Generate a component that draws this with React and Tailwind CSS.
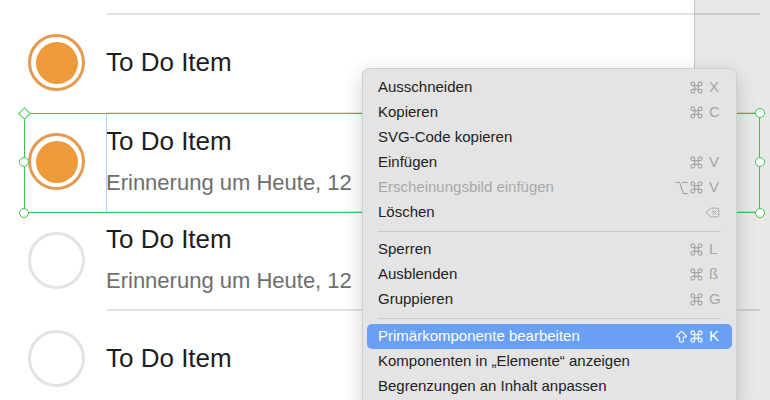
import React from 'react';
import { Command, Option, ArrowBigUp, Delete } from 'lucide-react';

const rows = [
  { checked: true, sub: null, h: 'h-[99px]' },
  { checked: true, sub: 'Erinnerung um Heute, 12', h: 'h-[99px]' },
  { checked: false, sub: 'Erinnerung um Heute, 12', h: 'h-[98px]' },
  { checked: false, sub: null, h: 'h-[99px]' },
];

const menu = [
  { label: 'Ausschneiden', mods: ['cmd'], key: 'X' },
  { label: 'Kopieren', mods: ['cmd'], key: 'C' },
  { label: 'SVG-Code kopieren' },
  { label: 'Einfügen', mods: ['cmd'], key: 'V' },
  { label: 'Erscheinungsbild einfügen', mods: ['opt', 'cmd'], key: 'V', disabled: true },
  { label: 'Löschen', del: true },
  'sep',
  { label: 'Sperren', mods: ['cmd'], key: 'L' },
  { label: 'Ausblenden', mods: ['cmd'], key: 'ß' },
  { label: 'Gruppieren', mods: ['cmd'], key: 'G' },
  'sep',
  { label: 'Primärkomponente bearbeiten', mods: ['shift', 'cmd'], key: 'K', active: true },
  { label: 'Komponenten in \u201EElemente\u201C anzeigen' },
  { label: 'Begrenzungen an Inhalt anpassen' },
];

const Check = ({ checked }) =>
  checked ? (
    <div className="w-[57px] h-[57px] rounded-full border-[3px] border-[#e49b4f] flex items-center justify-center">
      <div className="w-[42px] h-[42px] rounded-full bg-[#ed9a3a]" />
    </div>
  ) : (
    <div className="w-[57px] h-[57px] rounded-full border-[3px] border-[#e3e3e3]" />
  );

const Mod = ({ name }) => {
  if (name === 'cmd') return <Command size={15} strokeWidth={1.9} />;
  if (name === 'opt') return <Option size={16} strokeWidth={1.9} />;
  return <ArrowBigUp size={20} strokeWidth={1.7} />;
};

const Handle = ({ className }) => (
  <div className={`absolute w-[10px] h-[10px] rounded-full bg-white border-[1.5px] border-[#3dc64f] ${className}`} />
);

export default function App() {
  return (
    <div className="relative w-[770px] h-[400px] overflow-hidden bg-white font-['Liberation_Sans','DejaVu_Sans',sans-serif]">
      {/* list */}
      <div className="w-[760px] pt-[13px]">
        {rows.map((r, i) => (
          <div key={i} className={`flex ${r.h}`}>
            <div className="w-[106px] pl-[28px] flex items-center">
              <Check checked={r.checked} />
            </div>
            <div className="flex-1 border-t-2 border-[#e3e3e3] flex flex-col justify-center pb-[4px]">
              <div className="text-[26px] leading-[30px] text-[#1d1d1d]">To Do Item</div>
              {r.sub && (
                <div className="mt-[14px] text-[22px] leading-[26px] text-[#6e6e6e] whitespace-nowrap">{r.sub}</div>
              )}
            </div>
          </div>
        ))}
      </div>

      {/* dimmed area outside the artboard */}
      <div className="absolute left-[694px] top-0 bottom-0 right-0 bg-black/[0.09] border-l border-[#c4c4c4]" />

      {/* selection */}
      <div className="absolute left-[106px] top-[113px] w-px h-[99px] bg-[#b4cdf4]" />
      <div className="absolute left-[24px] top-[113px] w-[736px] h-[100px] border border-[#3dc64f]">
        <div className="absolute -left-[5px] -top-[5px] w-[9px] h-[9px] rotate-45 bg-white border-[1.5px] border-[#3dc64f]" />
        <Handle className="-left-[6px] top-[43px]" />
        <Handle className="-left-[6px] -bottom-[6px]" />
        <Handle className="-right-[6px] -top-[6px]" />
        <Handle className="-right-[6px] top-[43px]" />
        <Handle className="-right-[6px] -bottom-[6px]" />
      </div>

      {/* context menu */}
      <div className="absolute left-[362px] top-[68px] w-[375px] rounded-[7px] bg-[#e4e4e4] border border-[#cfcfcf] shadow-[0_6px_20px_rgba(0,0,0,0.18)] pt-[6px] pb-[6px] px-[4px] text-[15px]">
        {menu.map((m, i) =>
          m === 'sep' ? (
            <div key={i} className="h-[12px] flex items-center px-[11px]">
              <div className="h-px w-full bg-[#cbcbcb]" />
            </div>
          ) : (
            <div
              key={i}
              className={`h-[25px] flex items-center justify-between pl-[11px] pr-[14px] rounded-[5px] ${
                m.active ? 'bg-[#69a0f5] text-white' : m.disabled ? 'text-[#a9a9a9]' : 'text-[#222222]'
              }`}
            >
              <span>{m.label}</span>
              {m.key && (
                <span className={`flex items-center ${m.active ? 'text-white' : 'text-[#a6a6a6]'}`}>
                  {m.mods.map((g, j) => (
                    <span key={j} className="w-[15px] flex justify-center">
                      <Mod name={g} />
                    </span>
                  ))}
                  <span className="w-[9px] ml-[5px] text-[15px]">{m.key}</span>
                </span>
              )}
              {m.del && (
                <span className="-mr-[2px] text-[#a6a6a6]">
                  <Delete size={15} strokeWidth={1.6} />
                </span>
              )}
            </div>
          )
        )}
      </div>
    </div>
  );
}
